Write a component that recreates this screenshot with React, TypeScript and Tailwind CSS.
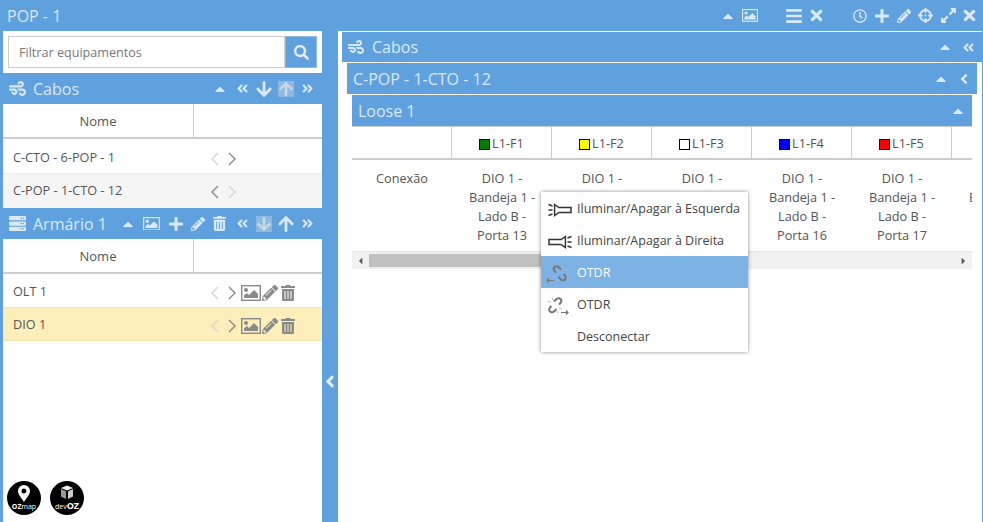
import {
  FaAngleDoubleLeft,
  FaAngleDoubleRight,
  FaAngleLeft,
  FaArrowDown,
  FaArrowUp,
  FaBars,
  FaCaretLeft,
  FaCaretRight,
  FaCaretUp,
  FaCrosshairs,
  FaExpandAlt,
  FaPencilAlt,
  FaPlus,
  FaRegClock,
  FaSearch,
  FaServer,
  FaTimes,
  FaTrashAlt,
  FaWind,
} from "react-icons/fa"

const fibers = [
  { name: "L1-F1", color: "bg-[#008000]", porta: "Porta 13" },
  { name: "L1-F2", color: "bg-[#ffff00]", porta: "Porta 14" },
  { name: "L1-F3", color: "bg-white", porta: "Porta 15" },
  { name: "L1-F4", color: "bg-[#0000ff]", porta: "Porta 16" },
  { name: "L1-F5", color: "bg-[#ff0000]", porta: "Porta 17" },
]

function Picture({ w, className }: { w: number; className?: string }) {
  return (
    <svg width={w} height={(w * 16) / 20} viewBox="0 0 20 16" className={className}>
      <rect x="0.7" y="0.7" width="18.6" height="14.6" fill="none" stroke="currentColor" strokeWidth="1.4" />
      <circle cx="5" cy="5" r="2" fill="currentColor" />
      <path d="M3 13v-2.500l3-2.500l2 2l5-5l4 4v4z" fill="currentColor" />
    </svg>
  )
}

function Chevron({ dir, className }: { dir: "left" | "right"; className: string }) {
  return (
    <svg width="8" height="14" viewBox="0 0 8 14" fill="none" stroke="currentColor" strokeWidth="1.4" className={className}>
      <path d={dir === "left" ? "M7 1L1 7l6 6" : "M1 1l6 6l-6 6"} />
    </svg>
  )
}

function Flashlight({ flip }: { flip?: boolean }) {
  return (
    <svg width="24" height="14" viewBox="0 0 24 14" fill="none" stroke="#333" strokeWidth="1.5" className={flip ? "-scale-x-100" : ""}>
      <path d="M6.600 1.500L11 4.500h12v5H11l-4.400 3z" />
      <path d="M0.500 1.500l4 1.500M0.500 7h4M0.500 12.500l4-1.500" />
    </svg>
  )
}

function BrokenLink({ flip }: { flip?: boolean }) {
  return (
    <svg width="24" height="18" viewBox="0 0 24 18" fill="none" className={flip ? "-scale-x-100" : ""}>
      <path d="M9 4.500l2.500-2.500a2.800 2.800 0 0 1 4 0a2.800 2.800 0 0 1 0 4l-1.500 1.500M11.500 12l-2.500 2.500a2.800 2.800 0 0 1-4 0a2.800 2.800 0 0 1 0-4l1.500-1.500" stroke="#777" strokeWidth="2" />
      <path d="M6 5.500L2.500 4M8 3L7.500 0.500M14 10.500l3 1.500M12 14l.5 2" stroke="#bbb" strokeWidth="1" />
      <path d="M16 15.500h7M21 13.500l2 2l-2 2" stroke="#777" strokeWidth="1.200" />
    </svg>
  )
}

function Logo({ label, kind }: { label: React.ReactNode; kind: "pin" | "box" }) {
  return (
    <div className="relative flex h-[34px] w-[34px] flex-col items-center rounded-full bg-black text-white">
      <svg width="18" height="20" viewBox="0 0 18 20" className="mt-[3px]">
        {kind === "pin" ? (
          <path fillRule="evenodd" fill="#fff" d="M9 1a6 6 0 0 1 6 6c0 3.500-3.500 7-6 11c-2.500-4-6-7.500-6-11a6 6 0 0 1 6-6zM9 4.500a2.500 2.500 0 1 0 0 5a2.500 2.500 0 0 0 0-5z" />
        ) : (
          <>
            <path fill="#eee" d="M3 4l6-2.500l6 2.500l-6 2.500z" />
            <path fill="#999" d="M3 5l5 2.200v7.800l-5-2.500z" />
            <path fill="#ccc" d="M10 7.200l5-2.200v7.500l-5 2.500z" />
          </>
        )}
      </svg>
      <span className="absolute bottom-[4px] text-[7px] leading-[8px] whitespace-nowrap">{label}</span>
    </div>
  )
}

function RowIcons({ left, right, tools }: { left: string; right: string; tools?: boolean }) {
  return (
    <div className="flex h-full flex-1 items-center pt-[2px] pl-[17px]">
      <Chevron dir="left" className={left} />
      <Chevron dir="right" className={`ml-[9px] ${right}`} />
      {tools && (
        <div className="ml-[5px] flex items-center text-[#8a8a8a]">
          <Picture w={20} />
          <FaPencilAlt className="ml-px text-[16px]" />
          <FaTrashAlt className="ml-[2px] text-[16px]" />
        </div>
      )}
    </div>
  )
}

function NomeHead() {
  return (
    <div className="flex h-[35px] shrink-0 border-b-[2px] border-[#ccc] text-[13px] text-[#555]">
      <div className="flex w-[191px] items-center justify-center border-r border-[#ccc] pt-[2px]">Nome</div>
    </div>
  )
}

export default function App() {
  return (
    <div className="relative flex h-[522px] w-[983px] flex-col overflow-hidden bg-white font-['Open_Sans',sans-serif] text-[#555]">
      {/* top bar */}
      <div className="flex h-[31px] shrink-0 items-center bg-[#5fa1de] pl-[7px] text-[#dbe9f7]">
        <span className="text-[16px]">POP - 1</span>
        <div className="ml-auto flex items-center pr-[5px]">
          <FaCaretUp className="mr-[6px] text-[16px]" />
          <Picture w={16} className="mr-[27px]" />
          <FaBars className="mr-[5px] text-[18px]" />
          <FaTimes className="mr-[28px] text-[17px]" />
          <FaRegClock className="mr-[7px] text-[14px]" />
          <FaPlus className="mr-[7px] text-[16px]" />
          <FaPencilAlt className="mr-[7px] text-[14px]" />
          <FaCrosshairs className="mr-[7px] text-[15px]" />
          <FaExpandAlt className="mr-[4px] text-[17px]" />
          <FaTimes className="text-[17px]" />
        </div>
      </div>

      <div className="flex min-h-0 flex-1">
        {/* left panel */}
        <div className="flex w-[322px] shrink-0 flex-col border-l-[3px] border-[#5fa1de] bg-white">
          <div className="flex h-[42px] shrink-0 items-center px-[5px]">
            <div className="flex h-[32px] flex-1 items-center border border-[#ccc] pt-[3px] pl-[10px] text-[12.6px] text-[#777]">Filtrar equipamentos</div>
            <div className="flex h-[32px] w-[32px] items-center justify-center border border-[#8fbce6] bg-[#5fa1de] text-[15px] text-[#e3eef9]">
              <FaSearch />
            </div>
          </div>

          <div className="flex h-[31px] shrink-0 items-center bg-[#5fa1de] pl-[6px] text-[#dbe9f7]">
            <FaWind className="mr-[7px] text-[17px]" />
            <span className="text-[16px]">Cabos</span>
            <div className="ml-auto flex items-center pr-[8px]">
              <FaCaretUp className="mr-[8px] text-[16px]" />
              <FaAngleDoubleLeft className="mr-[6px] text-[13px]" />
              <FaArrowDown className="mr-[5px] text-[18px]" />
              <span className="mr-[7px] flex h-[16px] w-[16px] items-center justify-center bg-[#8fb9df] text-[16px] text-[#c8d9e6]"><FaArrowUp /></span>
              <FaAngleDoubleRight className="text-[13px]" />
            </div>
          </div>
          <NomeHead />
          <div className="flex h-[35px] shrink-0 items-center border-b border-[#eee] pt-[4px] text-[12.7px]">
            <span className="w-[191px] pl-[10px]">C-CTO - 6-POP - 1</span>
            <RowIcons left="text-[#d5d5d5]" right="text-[#888]" />
          </div>
          <div className="flex h-[34px] shrink-0 items-center bg-[#f5f5f5] text-[12.7px]">
            <span className="w-[191px] pl-[10px]">C-POP - 1-CTO - 12</span>
            <RowIcons left="text-[#888]" right="text-[#d5d5d5]" />
          </div>

          <div className="flex h-[31px] shrink-0 items-center bg-[#5fa1de] pl-[6px] text-[#dbe9f7]">
            <FaServer className="mr-[7px] text-[17px]" />
            <span className="text-[16px]">Armário 1</span>
            <div className="ml-auto flex items-center pr-[8px]">
              <FaCaretUp className="mr-[7px] text-[16px]" />
              <Picture w={17} className="mr-[8px]" />
              <FaPlus className="mr-[7px] text-[16px]" />
              <FaPencilAlt className="mr-[7px] text-[14px]" />
              <FaTrashAlt className="mr-[9px] text-[15px]" />
              <FaAngleDoubleLeft className="mr-[7px] text-[13px]" />
              <span className="mr-[5px] flex h-[16px] w-[16px] items-center justify-center bg-[#8fb9df] text-[16px] text-[#c8d9e6]"><FaArrowDown /></span>
              <FaArrowUp className="mr-[6px] text-[18px]" />
              <FaAngleDoubleRight className="text-[13px]" />
            </div>
          </div>
          <NomeHead />
          <div className="flex h-[33px] shrink-0 items-center pt-[2px] text-[12.7px]">
            <span className="w-[191px] pl-[10px]">OLT 1</span>
            <RowIcons left="text-[#d5d5d5]" right="text-[#888]" tools />
          </div>
          <div className="flex h-[34px] shrink-0 items-center border-y border-[#f5e6ae] bg-[#feefba] pt-[2px] text-[12.7px]">
            <span className="w-[191px] pl-[10px]">DIO 1</span>
            <RowIcons left="text-[#d5d5d5]" right="text-[#888]" tools />
          </div>

          <div className="mt-auto flex gap-[9px] pb-[7px] pl-[4px]">
            <Logo kind="pin" label={<><b>OZ</b>map</>} />
            <Logo kind="box" label={<>dev<b className="text-[9px]">OZ</b></>} />
          </div>
        </div>

        {/* divider */}
        <div className="flex w-[16px] shrink-0 items-center justify-center bg-[#5fa1de] pt-[209px] text-[#e3eef9]">
          <FaAngleLeft className="text-[19px]" />
        </div>

        {/* right panel */}
        <div className="ml-[4px] flex min-w-0 flex-1 flex-col border-r border-[#5fa1de] pt-px">
          <div className="-mr-px flex h-[30px] shrink-0 items-center bg-[#5fa1de] pr-[8px] pl-[6px] text-[#dbe9f7]">
            <FaWind className="mr-[8px] text-[16px]" />
            <span className="text-[16px]">Cabos</span>
            <FaCaretUp className="mr-[9px] ml-auto text-[16px]" />
            <FaAngleDoubleLeft className="text-[13px]" />
          </div>
          <div className="mt-px mr-[5px] ml-[5px] flex h-[31px] shrink-0 items-center bg-[#5fa1de] pr-[5px] pl-[6px] text-[#dbe9f7]">
            <span className="text-[16px]">C-POP - 1-CTO - 12</span>
            <FaCaretUp className="mr-[7px] ml-auto text-[16px]" />
            <FaAngleLeft className="text-[16px]" />
          </div>
          <div className="mt-px mr-[10px] ml-[10px] flex h-[31px] shrink-0 items-center bg-[#5fa1de] pr-[6px] pl-[6px] text-[#dbe9f7]">
            <span className="text-[16px]">Loose 1</span>
            <FaCaretUp className="ml-auto text-[16px]" />
          </div>

          <div className="mr-[10px] ml-[10px] flex flex-col overflow-hidden">
            <div className="flex h-[34px] shrink-0 border-t border-b-[2px] border-[#ccc] text-[12.7px]">
              <div className="w-[100px] shrink-0 border-r border-[#ccc]" />
              {fibers.map((f) => (
                <div key={f.name} className="flex w-[100px] shrink-0 items-center justify-center gap-[2px] border-r border-[#ccc] pt-[3px]">
                  <span className={`h-[11px] w-[11px] border border-black ${f.color}`} />
                  {f.name}
                </div>
              ))}
              <div className="w-[100px] shrink-0" />
            </div>
            <div className="flex h-[91px] shrink-0 pt-[9px] text-[12.7px] leading-[19px]">
              <div className="w-[100px] shrink-0 text-center">Conexão</div>
              {fibers.map((f) => (
                <div key={f.name} className="w-[100px] shrink-0 px-[14px] text-center">
                  DIO 1 - Bandeja 1 - Lado B - {f.porta}
                </div>
              ))}
              <div className="w-[100px] shrink-0 px-[14px] text-center">DIO 1 - Bandeja 1 - Lado B - Porta 18</div>
            </div>
            <div className="flex h-[18px] shrink-0 items-center border-t border-[#e4e4e4] bg-[#f1f1f1] text-[10px] text-[#555]">
              <FaCaretLeft className="w-[17px]" />
              <div className="h-[13px] w-[372px] bg-[#c1c1c1]" />
              <FaCaretRight className="ml-auto w-[17px]" />
            </div>
          </div>
        </div>
      </div>

      {/* context menu */}
      <div className="absolute top-[192px] left-[541px] w-[207px] bg-white text-[12.5px] text-[#444] shadow-[0_0_4px_rgba(0,0,0,0.45)]">
        <div className="flex h-[32px] items-center pt-[3px]">
          <span className="w-[36px] pl-[7px]"><Flashlight /></span>Iluminar/Apagar à Esquerda
        </div>
        <div className="flex h-[32px] items-center pt-[3px]">
          <span className="w-[36px] pl-[7px]"><Flashlight flip /></span>Iluminar/Apagar à Direita
        </div>
        <div className="flex h-[32px] items-center bg-[#7cb2e4] pt-[3px] text-white">
          <span className="w-[36px] pl-[5px]"><BrokenLink flip /></span>OTDR
        </div>
        <div className="flex h-[32px] items-center pt-[3px]">
          <span className="w-[36px] pl-[4px]"><BrokenLink /></span>OTDR
        </div>
        <div className="flex h-[32px] items-center pt-[3px] pl-[36px]">Desconectar</div>
      </div>
    </div>
  )
}
